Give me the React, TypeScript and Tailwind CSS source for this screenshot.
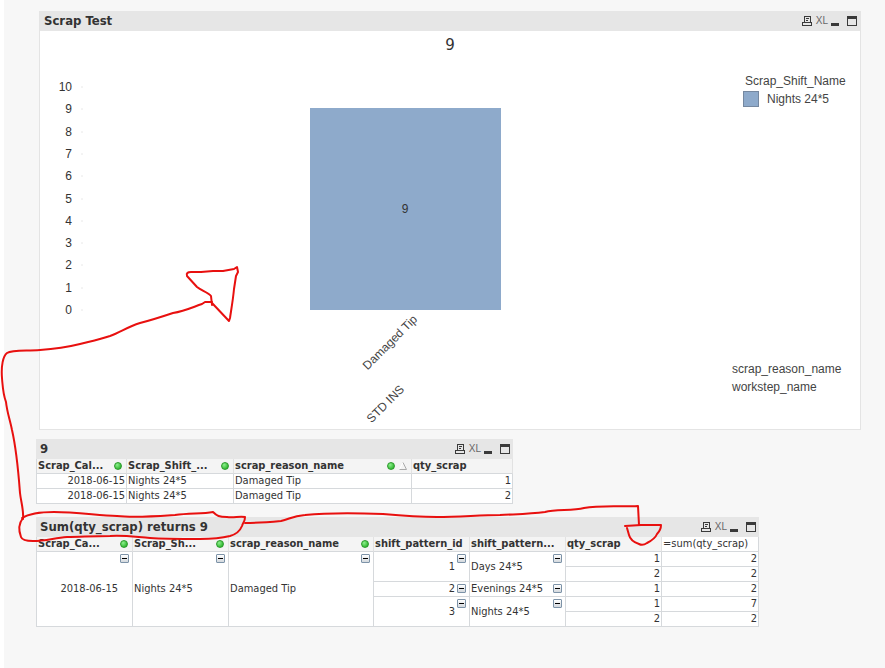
import { useState } from 'react'
import type { ReactNode } from 'react'

const TICKS = [10, 9, 8, 7, 6, 5, 4, 3, 2, 1, 0]
const BASELINE = 255
const TOP = 32

interface Pattern {
  id: number
  name: string
  rows: Array<[number, number]>
}

const PATTERNS: Pattern[] = [
  { id: 1, name: 'Days 24*5', rows: [[1, 2], [2, 2]] },
  { id: 2, name: 'Evenings 24*5', rows: [[1, 2]] },
  { id: 3, name: 'Nights 24*5', rows: [[1, 7], [2, 2]] },
]

const cell = 'border-r border-b border-[#d6d9dc] px-px leading-[14px] whitespace-nowrap'
const head = 'border-r border-b border-r-[#e2e2e2] border-b-[#d6d9dc] bg-[#f4f4f4] px-px leading-[14px] whitespace-nowrap text-left font-bold'

function Caption({ title }: { title: string }) {
  return (
    <header className="flex h-5 items-center justify-between bg-[#e6e6e6] pr-[3px] pl-1">
      <h2 className="text-[13px] leading-5 font-bold text-[#333]">{title}</h2>
      <div className="flex items-center text-[#3a3a3a]">
        <button aria-label="Print" className="mr-1">
          <svg width="10" height="12" viewBox="0 0 10 12" fill="none" stroke="currentColor" shapeRendering="crispEdges">
            <path d="M2.5 8V1.5H8.5V8M4 3.5H7M4 5.5H6M0.5 7.5H9.5V10.5H0.5Z" />
          </svg>
        </button>
        <button aria-label="Send to Excel" className="mr-[3px] font-['Liberation_Sans_Narrow','Liberation_Sans',sans-serif] text-[10px] leading-5 text-[#666]">
          XL
        </button>
        <button aria-label="Minimize" className="mr-2">
          <svg width="8" height="12" viewBox="0 0 8 12" fill="currentColor"><path d="M0 8H8V11H0Z" /></svg>
        </button>
        <button aria-label="Maximize">
          <svg width="10" height="12" viewBox="0 0 10 12" fill="currentColor" fillRule="evenodd">
            <path d="M0 1H10V11H0ZM1 4V10H9V4Z" />
          </svg>
        </button>
      </div>
    </header>
  )
}

// Green "selected" indicator shown in column headers
function Dot() {
  return <span className="block size-2 rounded-full border border-[#2c9a2c] bg-radial-[at_35%_30%] from-[#8df08d] to-[#14a514]" />
}

function Head({ label, dot, sort, span }: { label: string; dot?: boolean; sort?: boolean; span?: number }) {
  return (
    <th scope="col" colSpan={span} className={head}>
      <div className="flex items-center justify-between">
        <span>{label}</span>
        {dot && (
          <span className="flex items-center gap-1 pr-[3px]">
            <Dot />
            {sort && (
              <svg width="8" height="8" viewBox="0 0 8 8" fill="none">
                <path d="M0.5 7.5L4 0.5" stroke="#fff" />
                <path d="M4 0.5L7.5 7.5H0.5" stroke="#aaa" />
              </svg>
            )}
          </span>
        )}
      </div>
    </th>
  )
}

function Toggle({ label }: { label: string }) {
  const [open, setOpen] = useState(true)
  return (
    <button
      aria-label={label}
      aria-expanded={open}
      onClick={() => setOpen(!open)}
      className="flex size-[9px] items-center justify-center rounded-[1px] border border-[#7d93a8] bg-linear-to-b from-white to-[#d3d8dd]"
    >
      <span className="block h-px w-[5px] bg-black" />
    </button>
  )
}

function Group({ label, rows, right, children }: { label: string; rows: number; right?: boolean; children: ReactNode }) {
  return (
    <>
      <td rowSpan={rows} className={`border-b border-[#d6d9dc] pl-px leading-[14px] whitespace-nowrap ${right ? 'pr-px text-right' : ''}`}>
        {children}
      </td>
      <td rowSpan={rows} className="border-r border-b border-[#d6d9dc] pt-[2px] pl-px align-top">
        <Toggle label={label} />
      </td>
    </>
  )
}

function ScrapChart() {
  const step = (BASELINE - TOP) / 10
  return (
    <section className="mr-6 ml-[3px] border border-t-0 border-[#e4e4e4] bg-white">
      <Caption title="Scrap Test" />
      <div className="pt-1 text-[#333]">
        <h3 className="text-center font-['DejaVu_Sans',sans-serif] text-[15px] leading-5">9</h3>
        <div className="flex justify-between font-['Liberation_Sans',sans-serif] text-xs text-[#444]">
          <svg width="600" height="374" viewBox="0 0 600 374" className="shrink-0" fill="#333">
            {TICKS.map((t) => (
              <g key={t}>
                <text x="32" y={Math.round(BASELINE - t * step) + 4} textAnchor="end">{t}</text>
                <path d={`M41 ${Math.round(BASELINE - t * step)}h2`} stroke="#e8e8e8" />
              </g>
            ))}
            <rect x="270" y="53" width="191" height="202" fill="#8eaacb" />
            <text x="365" y="158" textAnchor="middle">9</text>
            <text transform="translate(378 265) rotate(-45)" textAnchor="end" fill="#444">Damaged Tip</text>
            <text transform="translate(365 335) rotate(-45)" textAnchor="end" fill="#444">STD INS</text>
          </svg>
          <div className="flex w-32 flex-col justify-between pt-[17px] pb-[33px]">
            <div className="pl-[11px]">
              <p className="pl-[2px] leading-[18px]">Scrap_Shift_Name</p>
              <p className="flex items-center gap-2 leading-[18px]">
                <span className="size-4 border border-[#7588a0] bg-[#8eaacb]" />
                Nights 24*5
              </p>
            </div>
            <div className="leading-[18px]">
              <p>scrap_reason_name</p>
              <p>workstep_name</p>
            </div>
          </div>
        </div>
      </div>
    </section>
  )
}

function DetailTable() {
  return (
    <section className="w-[477px] max-w-full">
      <Caption title="9" />
      <table className="w-full table-fixed border-separate border-spacing-0 border-l border-[#d6d9dc] bg-white">
        <colgroup>
          <col className="w-[90px]" />
          <col className="w-[107px]" />
          <col className="w-[178px]" />
          <col />
        </colgroup>
        <thead>
          <tr>
            <Head label="Scrap_Cal..." dot />
            <Head label="Scrap_Shift_..." dot />
            <Head label="scrap_reason_name" dot sort />
            <Head label="qty_scrap" />
          </tr>
        </thead>
        <tbody>
          {[1, 2].map((qty) => (
            <tr key={qty}>
              <td className={`${cell} text-right`}>2018-06-15</td>
              <td className={cell}>Nights 24*5</td>
              <td className={cell}>Damaged Tip</td>
              <td className={`${cell} text-right`}>{qty}</td>
            </tr>
          ))}
        </tbody>
      </table>
    </section>
  )
}

function PivotTable() {
  return (
    <section className="w-[723px] max-w-full">
      <Caption title="Sum(qty_scrap) returns 9" />
      <table className="w-full table-fixed border-separate border-spacing-0 border-l border-[#d6d9dc] bg-white">
        <colgroup>
          <col className="w-[82px]" />
          <col className="w-[14px]" />
          <col className="w-[82px]" />
          <col className="w-[14px]" />
          <col className="w-[131px]" />
          <col className="w-[14px]" />
          <col className="w-[82px]" />
          <col className="w-[14px]" />
          <col className="w-[82px]" />
          <col className="w-[14px]" />
          <col className="w-[96px]" />
          <col />
        </colgroup>
        <thead>
          <tr>
            <Head label="Scrap_Ca..." dot span={2} />
            <Head label="Scrap_Sh..." dot span={2} />
            <Head label="scrap_reason_name" dot span={2} />
            <Head label="shift_pattern_id" span={2} />
            <Head label="shift_pattern..." span={2} />
            <Head label="qty_scrap" />
            <th scope="col" className={`${cell} text-left font-normal`}>=sum(qty_scrap)</th>
          </tr>
        </thead>
        <tbody>
          {PATTERNS.map((p, i) =>
            p.rows.map(([qty, sum], j) => (
              <tr key={`${p.id}-${j}`}>
                {i === 0 && j === 0 && (
                  <>
                    <Group label="Collapse date" rows={5} right>2018-06-15</Group>
                    <Group label="Collapse shift" rows={5}>Nights 24*5</Group>
                    <Group label="Collapse reason" rows={5}>Damaged Tip</Group>
                  </>
                )}
                {j === 0 && (
                  <>
                    <Group label={`Collapse pattern ${p.id}`} rows={p.rows.length} right>{p.id}</Group>
                    <Group label={`Collapse ${p.name}`} rows={p.rows.length}>{p.name}</Group>
                  </>
                )}
                <td className={`${cell} text-right`}>{qty}</td>
                <td className={`${cell} text-right`}>{sum}</td>
              </tr>
            )),
          )}
        </tbody>
      </table>
    </section>
  )
}

// Freehand red pen marks linking the pivot title to the chart and the sum column
function PenMarks() {
  return (
    <svg
      width="680"
      height="560"
      viewBox="0 0 680 560"
      className="pointer-events-none absolute top-0 left-0"
      fill="none"
      stroke="#e8100f"
      strokeWidth="2"
      strokeLinejoin="round"
      strokeLinecap="round"
      aria-hidden="true"
    >
      <path d="M23 519C24 511 21 502 20 493C19 480 17 452 12 430C10 420 7 412 6 402C3 394 3 390 2 378C1 366 3 356 7 353C12 350 24 351 40 350C55 349 68 347 80 344C92 341 101 339 110 336C121 332 127 327 140 323C152 320 164 316 173 313C185 311 193 307 202 304L205 302H212" />
      <path d="M212 305L211 296C208 292 202 291 197 287L187 276C186 273 188 272 191 272L201 272L213 271L223 271L234 269L237 267L238 272L236 276L234 289C233 300 231 311 230 318L229 321L212 303" />
      <path d="M22 518C30 513 42 512 54 512C75 512 96 515 117 516C135 518 160 516 175 515C190 513 202 514 213 512C217 516 219 517 227 517C234 518 239 516 245 517C245 522 243 522 242 526C240 531 237 534 230 536C222 538 212 539 200 539C180 539 165 539 150 538C136 537 124 535 110 536C92 536 80 537 67 537C54 538 46 541 33 541C27 541 22 540 21 537C18 529 19 523 23 518" />
      <path d="M245 523C258 523 270 522 281 521C290 519 292 516 305 515C325 513 356 513 383 514C405 516 420 517 437 517C460 517 480 515 500 515C520 514 530 514 545 512C556 509 572 511 584 508C600 505 620 507 638 506L639 525" />
      <path d="M625 526L641 525L661 525C661 529 659 532 657 534C655 539 651 541 647 543C644 545 641 545 639 544C633 542 630 539 629 535L627 528" />
    </svg>
  )
}

export default function App() {
  return (
    <main className="relative flex min-h-screen flex-col border-l-4 border-white bg-[#f7f7f7] pt-[11px] pl-8 font-['DejaVu_Sans_Condensed','DejaVu_Sans',sans-serif] text-[11px] text-[#333]">
      <ScrapChart />
      <div className="flex flex-col items-start gap-[13px] pt-[9px]">
        <DetailTable />
        <PivotTable />
      </div>
      <div className="absolute top-0 -left-1">
        <PenMarks />
      </div>
    </main>
  )
}
